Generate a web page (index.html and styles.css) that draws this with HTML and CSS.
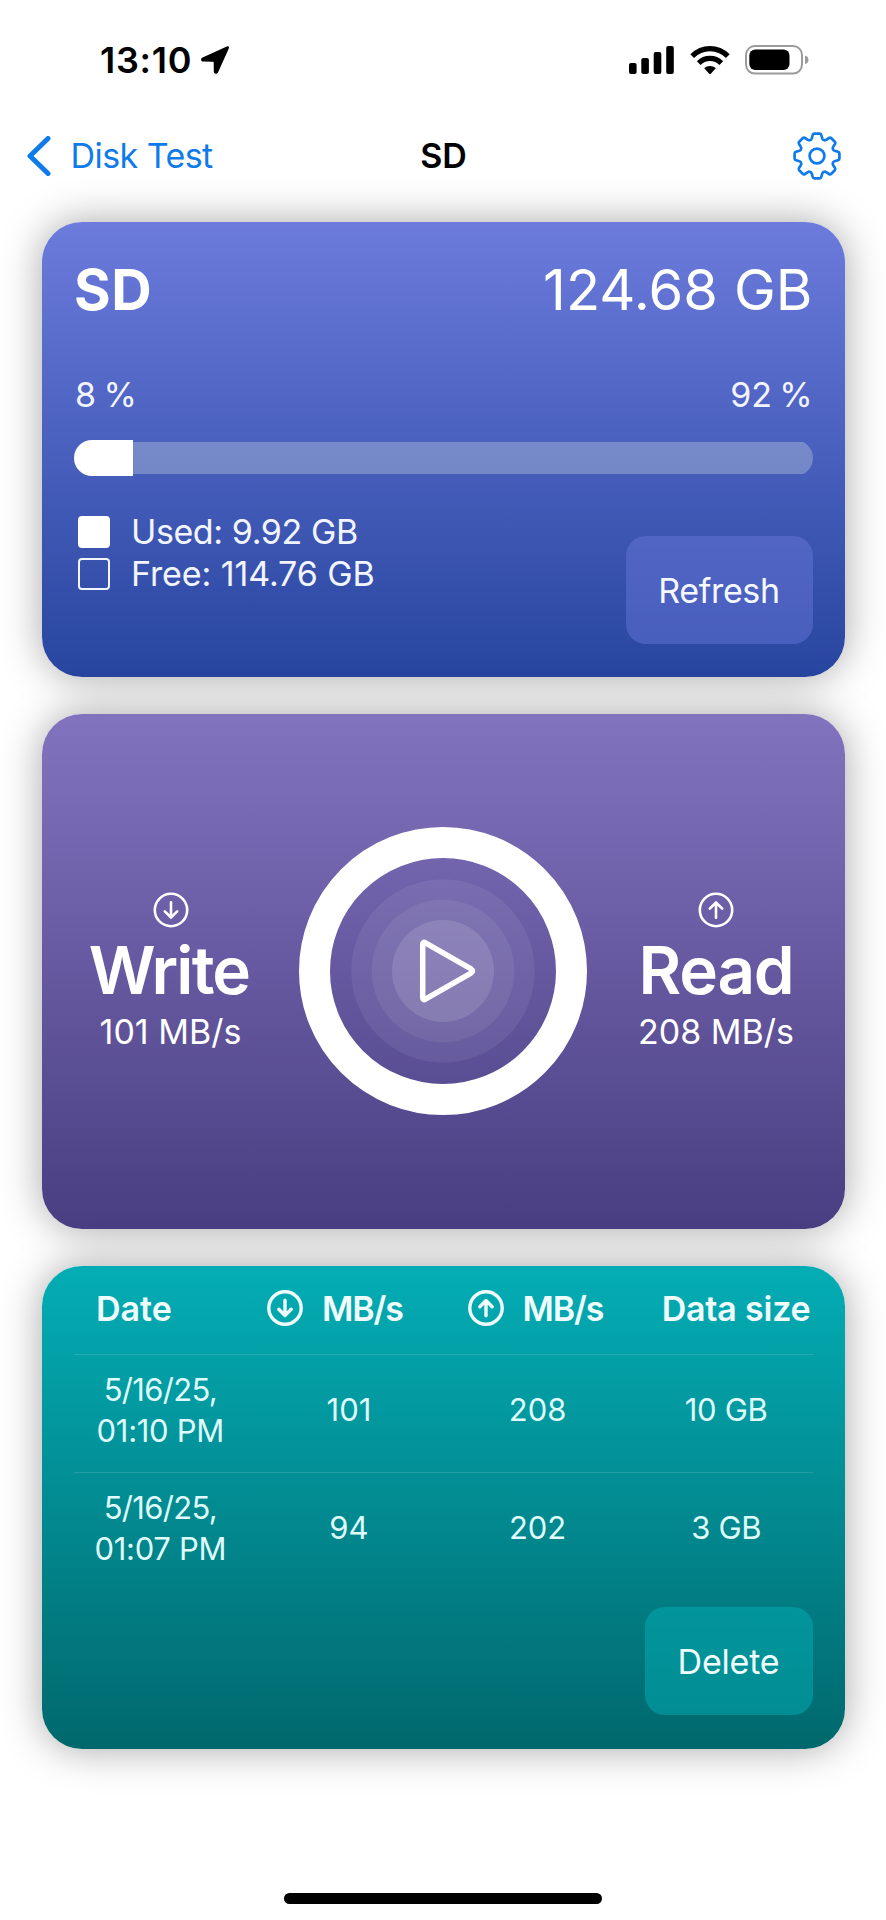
FILE: index.html
```html
<!DOCTYPE html>
<html lang="en">
<head>
<meta charset="utf-8">
<title>Disk Test</title>
<link rel="stylesheet" href="styles.css">
</head>
<body>
<svg class="defs" width="0" height="0">
  <symbol id="arrow-down" viewBox="0 0 36 36">
    <circle class="ring" cx="18" cy="18" r="16.2"/>
    <path d="M18 10.2V25M11.8 19.3L18 25.5L24.2 19.3"/>
  </symbol>
  <symbol id="arrow-up" viewBox="0 0 36 36">
    <circle class="ring" cx="18" cy="18" r="16.2"/>
    <path d="M18 25.8V11M11.8 16.7L18 10.5L24.2 16.7"/>
  </symbol>
</svg>
<div class="screen">
  <header class="status">
    <div class="status-left">
      <span class="time">13:10</span>
      <svg class="location" width="30" height="30" viewBox="0 0 30 30"><path d="M26.8 1.6L2.6 12.4C.2 13.5.8 16.6 3.4 16.6L13 16.7C13.5 16.7 13.7 16.9 13.7 17.4L13.8 26.6C13.8 29.2 17 29.7 18.1 27.3L28.8 3.4C29.4 1.9 28.3.9 26.8 1.6Z"/></svg>
    </div>
    <div class="status-right">
      <svg class="signal" width="45" height="28" viewBox="0 0 45 28"><rect x="0" y="17" width="7.6" height="11" rx="2"/><rect x="12.3" y="12" width="7.6" height="16" rx="2"/><rect x="24.7" y="6" width="7.6" height="22" rx="2"/><rect x="37.2" y="0" width="7.6" height="28" rx="2"/></svg>
      <svg class="wifi" width="40" height="29" viewBox="0 0 40 29"><path class="arc" d="M2.2 10.2C12.2.2 27.8.2 37.8 10.2"/><path class="arc" d="M8.7 17.1C15 10.8 25 10.8 31.3 17.1"/><path d="M14.2 22.3C17.6 19.3 22.4 19.3 25.8 22.3L20.8 27.7Q20 28.5 19.2 27.7Z"/></svg>
      <svg class="battery" width="64" height="30" viewBox="0 0 64 30"><rect class="shell" x="1" y="1" width="56" height="27.6" rx="9"/><rect x="4.3" y="4.6" width="40.2" height="20.4" rx="6"/><path class="nub" d="M60 10.5Q63.5 11.5 63.5 14.8T60 19.1Z"/></svg>
    </div>
  </header>

  <nav class="nav">
    <a class="back">
      <svg class="chevron" width="24" height="40" viewBox="0 0 24 40"><path d="M21 2.5L3 20L21 37.5"/></svg>
      <span class="back-label">Disk Test</span>
    </a>
    <h1 class="nav-title">SD</h1>
    <svg class="gear" width="48" height="48" viewBox="-24 -24 48 48">
      <path d="M-4.3-21Q-3.9-22.4-2.6-22.4H2.6Q3.9-22.4 4.3-21L5.3-17.4Q5.8-16 7.1-15.9Q8.2-15.4 9.2-16.2L12-18Q13.3-18.8 14.3-17.8L17.8-14.3Q18.8-13.3 18-12L16.2-9.2Q15.4-8.2 15.9-7.1Q16-5.8 17.4-5.3L21-4.3Q22.4-3.9 22.4-2.6V2.6Q22.4 3.9 21 4.3L17.4 5.3Q16 5.8 15.9 7.1Q15.4 8.2 16.2 9.2L18 12Q18.8 13.3 17.8 14.3L14.3 17.8Q13.3 18.8 12 18L9.2 16.2Q8.2 15.4 7.1 15.9Q5.8 16 5.3 17.4L4.3 21Q3.9 22.4 2.6 22.4H-2.6Q-3.9 22.4-4.3 21L-5.3 17.4Q-5.8 16-7.1 15.9Q-8.2 15.4-9.2 16.2L-12 18Q-13.3 18.8-14.3 17.8L-17.8 14.3Q-18.8 13.3-18 12L-16.2 9.2Q-15.4 8.2-15.9 7.1Q-16 5.8-17.4 5.3L-21 4.3Q-22.4 3.9-22.4 2.6V-2.6Q-22.4-3.9-21-4.3L-17.4-5.3Q-16-5.8-15.9-7.1Q-15.4-8.2-16.2-9.2L-18-12Q-18.8-13.3-17.8-14.3L-14.3-17.8Q-13.3-18.8-12-18L-9.2-16.2Q-8.2-15.4-7.1-15.9Q-5.8-16-5.3-17.4Z"/>
      <circle r="7.4"/>
    </svg>
  </nav>

  <main class="cards">
    <section class="card storage">
      <div class="row heading"><h2 class="disk-name">SD</h2><span class="capacity">124.68 GB</span></div>
      <div class="row percents"><span>8 %</span><span>92 %</span></div>
      <div class="meter"><div class="meter-used" style="width:7.96%"></div><div class="meter-free"></div></div>
      <div class="row storage-foot">
        <ul class="legend">
          <li><i class="swatch filled"></i><span class="used-text">Used: 9.92 GB</span></li>
          <li><i class="swatch"></i><span class="free-text">Free: 114.76 GB</span></li>
        </ul>
        <button class="button refresh">Refresh</button>
      </div>
    </section>

    <section class="card speed">
      <div class="metric">
        <svg class="icon" width="36" height="36"><use href="#arrow-down"/></svg>
        <h2 class="metric-name write">Write</h2>
        <span class="metric-value">101 MB/s</span>
      </div>
      <svg class="dial" width="288" height="288" viewBox="-144 -144 288 288">
        <circle class="glow" r="91.7"/><circle class="glow" r="71.3"/><circle class="glow strong" r="51"/>
        <circle class="dial-ring" r="128.5"/>
        <path class="play" d="M-20.3-26.6Q-20.3-29.6-17.6-28.2L28-2.1Q31 0 28 2.1L-17.6 28.2Q-20.3 29.6-20.3 26.6Z"/>
      </svg>
      <div class="metric">
        <svg class="icon" width="36" height="36"><use href="#arrow-up"/></svg>
        <h2 class="metric-name read">Read</h2>
        <span class="metric-value">208 MB/s</span>
      </div>
    </section>

    <section class="card history">
      <div class="table-head">
        <span>Date</span>
        <span class="th-speed"><svg class="icon bold" width="36" height="36"><use href="#arrow-down"/></svg>MB/s</span>
        <span class="th-speed"><svg class="icon bold" width="36" height="36"><use href="#arrow-up"/></svg>MB/s</span>
        <span class="th-size">Data size</span>
      </div>
      <div class="table-row"><span><span class="day">5/16/25,</span><br><span class="clock">01:10 PM</span></span><span>101</span><span>208</span><span class="size">10 GB</span></div>
      <div class="table-row"><span><span class="day">5/16/25,</span><br><span class="clock">01:07 PM</span></span><span>94</span><span>202</span><span class="size">3 GB</span></div>
      <div class="history-foot"><button class="button delete">Delete</button></div>
    </section>
  </main>
  <div class="home"></div>
</div>
</body>
</html>
```
FILE: styles.css
```css
* { box-sizing: border-box; margin: 0; padding: 0; }
body { background: #fff; font-family: Inter, "Liberation Sans", sans-serif; font-size: 34px; color: #000; }
.defs { display: block; }
.screen { width: 886px; height: 1920px; display: flex; flex-direction: column; align-items: stretch; overflow: hidden; background: #fff; }
svg { flex: none; display: block; }

.status { height: 120px; display: flex; justify-content: space-between; padding: 0 77.5px 0 100px; }
.status-left { display: flex; align-items: center; gap: 8px; }
.time { font-size: 36px; font-weight: 600; letter-spacing: 0.7px; }
.status-right { display: flex; align-items: center; }
.wifi { margin-left: 15.5px; }
.wifi .arc { fill: none; stroke: #000; stroke-width: 5.2; }
.battery { margin-left: 15px; }
.battery .shell { fill: none; stroke: #9b9b9b; stroke-width: 2; }
.battery .nub { fill: #9b9b9b; }

.nav { height: 71px; display: grid; grid-template-columns: 1fr auto 1fr; align-items: center; padding: 0 45px 0 27px; }
.back { display: flex; align-items: center; gap: 19.5px; color: #0f7bea; }
.chevron { fill: none; stroke: #0f7bea; stroke-width: 5; stroke-linecap: round; stroke-linejoin: round; }
.back-label { letter-spacing: -0.55px; }
.nav-title { font-size: 34px; font-weight: 600; margin-left: 19px; }
.gear { justify-self: end; fill: none; stroke: #0f7bea; stroke-width: 2.7; stroke-linejoin: round; }

.cards { display: flex; flex-direction: column; gap: 37.5px; padding: 31px 41.5px 0 42px; }
.card { border-radius: 40px; box-shadow: 0 0 40px rgba(0, 0, 0, .35); color: #fff; padding: 0 32px; }
.row { display: flex; justify-content: space-between; }

.storage { height: 454.5px; padding-top: 34px; background: linear-gradient(#6c7bdc, #27459f); }
.heading { height: 68px; line-height: 68px; font-size: 56px; }
.disk-name { font-size: 56px; font-weight: 700; letter-spacing: .5px; }
.capacity { letter-spacing: .1px; }
.percents { height: 42px; line-height: 42px; margin-top: 50px; color: #f2f5ff; padding: 0 0 0 1px; word-spacing: -1.8px; letter-spacing: -.2px; }
.meter { height: 36px; margin-top: 24px; border-radius: 18px; overflow: hidden; display: flex; align-items: center; }
.meter-used { height: 36px; background: #fff; }
.meter-free { flex: 1; height: 32px; background: rgba(184, 200, 220, .4); }
.storage-foot { height: 132.5px; margin-top: 35px; align-items: flex-start; }
.legend { list-style: none; padding-left: 4px; color: #f2f5ff; }
.legend li { display: flex; align-items: center; gap: 21px; height: 42px; line-height: 42px; }
.used-text { letter-spacing: -0.4px; }
.free-text { letter-spacing: -0.1px; }
.swatch { width: 32px; height: 32px; border: 2.5px solid #f2f5ff; border-radius: 4px; }
.swatch.filled { background: #fff; border-color: #fff; }
.button { font: inherit; color: #f4f8ff; height: 108px; border: 0; border-radius: 20px; align-self: flex-end; }
.refresh { width: 187px; padding-top: 1px; background: rgba(108, 123, 219, .45); letter-spacing: -0.35px; }

.speed { height: 514.5px; display: flex; align-items: center; justify-content: space-between; padding: 0; background: linear-gradient(#8273be, #493e82); }
.metric { width: 257px; display: flex; flex-direction: column; align-items: center; padding-top: 1.5px; }
.icon { fill: none; stroke: currentColor; stroke-width: 2.6; stroke-linecap: round; stroke-linejoin: round; }
.icon.bold { stroke-width: 3.4; }
.metric-name { font-size: 65.5px; font-weight: 600; line-height: 80px; margin-top: 3px; }
.write { letter-spacing: -1.8px; margin-left: -3px; }
.read { letter-spacing: -1.2px; }
.metric-value { line-height: 42px; }
.glow { fill: rgba(255, 255, 255, .07); }
.glow.strong { fill: rgba(255, 255, 255, .12); }
.dial-ring { fill: none; stroke: #fff; stroke-width: 31; }
.play { fill: none; stroke: #fff; stroke-width: 5.5; stroke-linejoin: round; }

.history { height: 482.5px; background: linear-gradient(#04adb5, #00686d); }
.table-head { height: 88px; padding: 0 2px 4px 22px; display: grid; grid-template-columns: 171px 200.5px 1fr auto; align-items: center; font-weight: 600; color: #effdfd; }
.th-speed { display: flex; align-items: center; gap: 19px; letter-spacing: -1.1px; }
.th-size { letter-spacing: -0.2px; }
.table-row { height: 118px; padding-bottom: 8px; border-top: 1.5px solid rgba(255, 255, 255, .13); display: grid; grid-template-columns: repeat(4, 1fr); column-gap: 16px; align-items: center; text-align: center; font-size: 31px; line-height: 41px; color: #dffbfb; }
.day { letter-spacing: -0.7px; }
.clock, .size { letter-spacing: -0.3px; }
.history-foot { height: 125px; display: flex; justify-content: flex-end; align-items: flex-end; }
.delete { width: 168px; background: rgba(4, 173, 181, .5); color: #effdfd; letter-spacing: -0.2px; }

.home { width: 318px; height: 11px; border-radius: 6px; background: #000; margin: auto auto 16px; }
```
